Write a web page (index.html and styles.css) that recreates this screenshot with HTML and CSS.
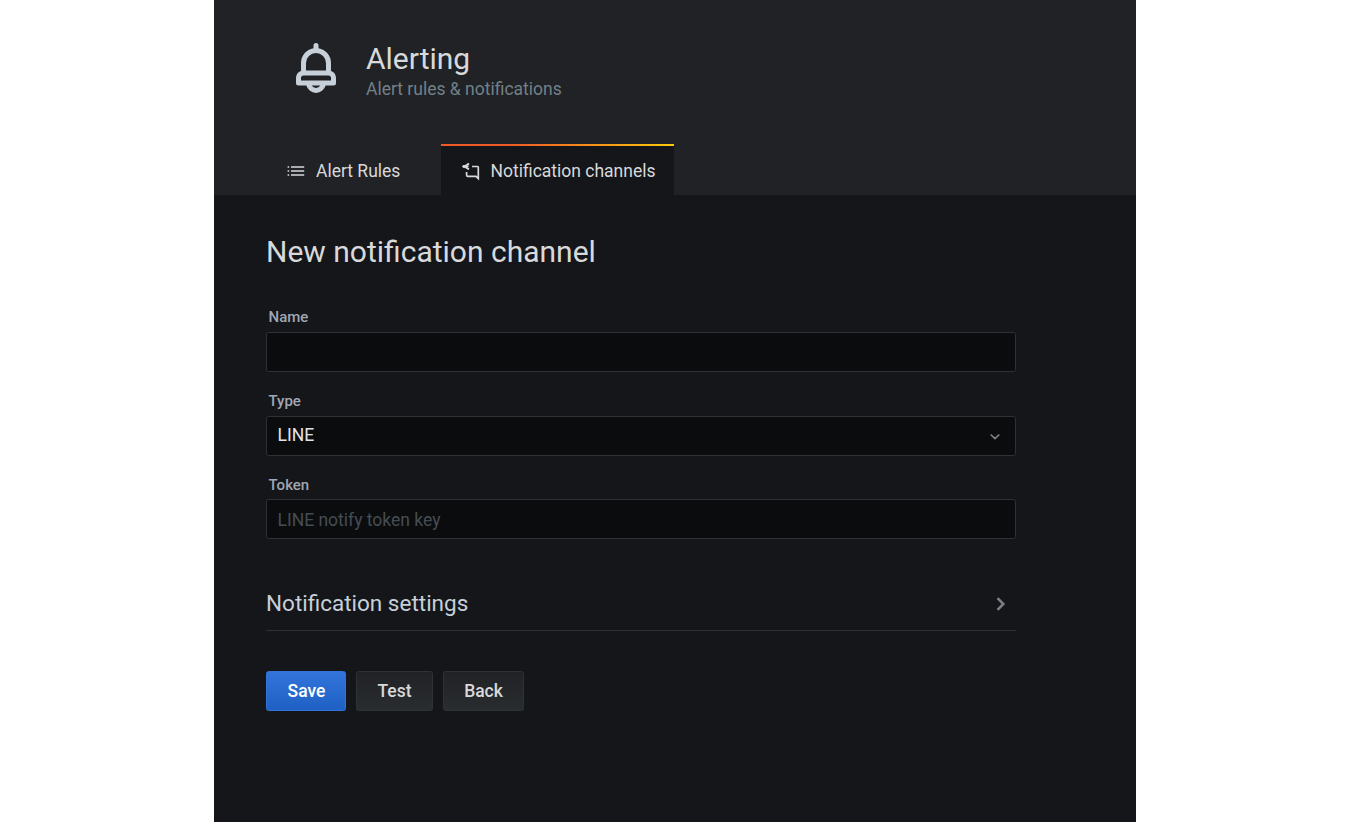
FILE: index.html
```html
<!DOCTYPE html>
<html lang="en">
<head>
<meta charset="utf-8">
<title>Alerting</title>
<link rel="stylesheet" href="styles.css">
</head>
<body>
<div class="page">
  <header class="page-header">
    <div class="heading">
      <svg class="bell" viewBox="0 0 24 24"><path d="M18,13.18V10a6,6,0,0,0-5-5.91V3a1,1,0,0,0-2,0V4.09A6,6,0,0,0,6,10v3.18A3,3,0,0,0,4,16v2a1,1,0,0,0,1,1H8.14a4,4,0,0,0,7.72,0H19a1,1,0,0,0,1-1V16A3,3,0,0,0,18,13.18ZM8,10a4,4,0,0,1,8,0v3H8Zm4,10a2,2,0,0,1-1.72-1h3.44A2,2,0,0,1,12,20Zm6-3H6V16a1,1,0,0,1,1-1H17a1,1,0,0,1,1,1Z"/></svg>
      <div>
        <h1 class="title">Alerting</h1>
        <div class="subtitle">Alert rules &amp; notifications</div>
      </div>
    </div>
    <nav class="tabs">
      <a class="tab"><svg class="tab-icon" viewBox="0 0 20 20"><path d="M5 6H18.2M5 10H18.2M5 14H18.2M1.6 6H3.2M1.6 10H3.2M1.6 14H3.2"/></svg>Alert Rules</a>
      <a class="tab active"><svg class="tab-icon" viewBox="0 0 20 20"><path d="M7.2 3.2L2.8 5.5L7.2 7.8M2.8 5.5H7.5M11 5.5H16.5Q17.3 5.5 17.3 6.3V17.5L15 15.4H7Q5.6 15.4 5.6 14V11"/><circle class="dot" cx="2.8" cy="5.5" r="1.4"/><circle class="dot" cx="7.2" cy="3.2" r="1.1"/><circle class="dot" cx="7.2" cy="7.8" r="1.1"/></svg>Notification channels</a>
    </nav>
  </header>
  <main class="content">
    <h2 class="form-title">New notification channel</h2>
    <label class="label" for="name">Name</label>
    <input class="field" id="name" type="text">
    <span class="label">Type</span>
    <div class="field select"><span class="value">LINE</span><svg class="caret" viewBox="0 0 20 20"><path d="M6.2 9L10 12.6L13.8 9"/></svg></div>
    <label class="label token-label" for="token">Token</label>
    <input class="field token" id="token" type="text" placeholder="LINE notify token key">
    <div class="section"><span>Notification settings</span><svg class="chevron" viewBox="0 0 20 20"><path d="M6.6 4.2L12.3 10L6.6 15.8"/></svg></div>
    <div class="buttons">
      <button class="button primary">Save</button>
      <button class="button test">Test</button>
      <button class="button back">Back</button>
    </div>
  </main>
</div>
</body>
</html>
```
FILE: styles.css
```css
* { box-sizing: border-box; }
body { margin: 0; background: #fff; font-family: Roboto, sans-serif; font-size: 17.5px; color: #d8d9da; }
.page { width: 922px; height: 822px; margin: 0 auto; background: #15161a; overflow: hidden; }
.page-header { height: 195px; padding: 38px 52px 0; background: #202226; display: flex; flex-direction: column; justify-content: space-between; }
.heading { display: flex; padding-left: 20px; gap: 20px; }
.bell { width: 60px; height: 60px; fill: #c7d0d9; }
.title { margin: 2px 0 0; font-size: 30px; font-weight: 400; line-height: 37px; }
.subtitle { line-height: 24px; color: #738087; }
.tabs { display: flex; height: 51px; }
.tab { display: flex; align-items: center; padding: 3px 41px 0 20px; gap: 10px; width: 175px; white-space: nowrap; }
.tab-icon { width: 20px; height: 20px; flex: none; fill: none; stroke: #d8d9da; stroke-width: 1.7; }
.dot { fill: #d8d9da; stroke: none; }
.active { width: 233px; padding: 1px 0 0 19.5px; border-top: 2px solid; border-image: linear-gradient(90deg, #f05a28 30%, #fbca0a 99%) 1; border-left: 0; border-right: 0; border-bottom: 0; background: #15161a; }
.content { padding: 38px 120px 0 52px; }
.form-title { margin: 0 0 34px; font-size: 30px; font-weight: 400; line-height: 37px; }
.label { display: block; height: 28px; padding: 3px 0 0 2.5px; font-size: 15px; font-weight: 500; line-height: 20px; color: #9fa7b3; }
.token-label { padding-top: 4px; }
.field { display: block; width: 750px; height: 40px; margin: 0 0 16px; padding: 0 10.5px; font: inherit; color: #d8d9da; background: #0b0c0e; border: 1px solid #2c3235; border-radius: 2.5px; outline: 0; }
.field::placeholder { color: #464c54; opacity: 1; }
.token { padding-top: 2px; }
.select { display: flex; align-items: center; justify-content: space-between; margin-bottom: 15px; color: #e3e4e6; }
.value { margin-top: -3px; }
.caret, .chevron { width: 20px; height: 20px; fill: none; stroke: #7b8087; stroke-width: 1.7; stroke-linecap: round; stroke-linejoin: round; }
.chevron { margin: 3px 5px 0 0; stroke-width: 2.5; stroke-linecap: butt; stroke-linejoin: miter; }
.section { display: flex; align-items: center; justify-content: space-between; height: 56px; margin-top: 36px; border-bottom: 1px solid #2c3235; font-size: 22.5px; color: #c7d0d9; }
.buttons { display: flex; gap: 10px; margin-top: 40px; }
.button { height: 40px; padding: 0; font: 500 17.5px Roboto, sans-serif; color: #d8d9da; background: linear-gradient(#202226, #2a2d30); border: 1px solid #2c3235; border-radius: 2.5px; }
.primary { width: 80px; padding-left: 1px; color: #fff; background: linear-gradient(#3274d9, #1f60c4); border-color: #3274d9; }
.test { width: 77px; }
.back { width: 81px; }
```
